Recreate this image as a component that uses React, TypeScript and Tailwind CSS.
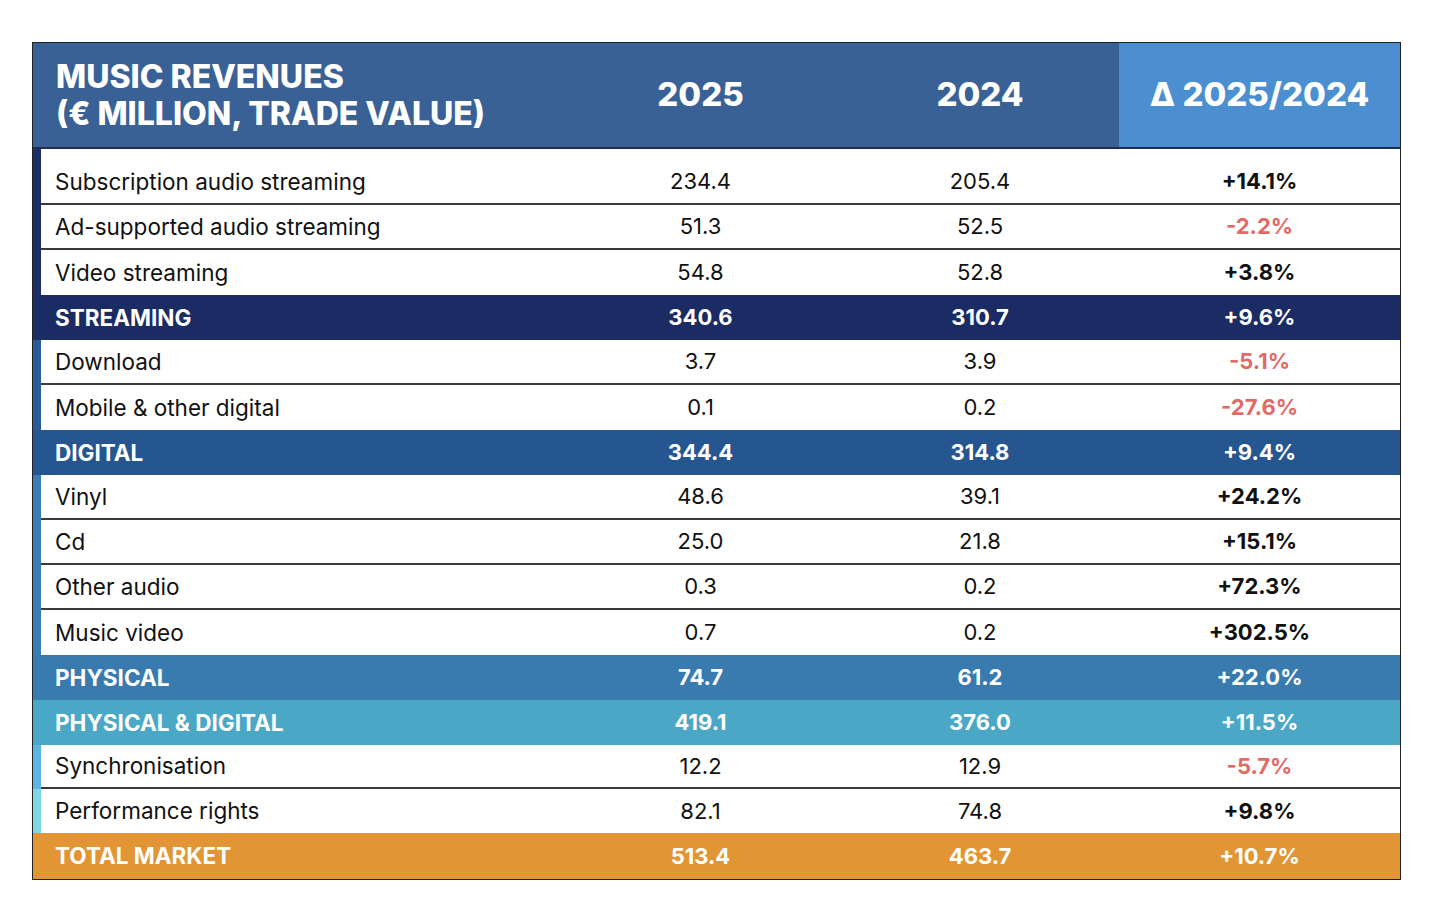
import React from "react";

type Row = {
  label: string;
  y25: string;
  y24: string;
  delta: string;
  kind: "item" | "total";
  bg?: string;
  strip: string;
  neg?: boolean;
  first?: boolean;
  line?: boolean;
  h: string;
};

const rows: Row[] = [
  { label: "Subscription audio streaming", y25: "234.4", y24: "205.4", delta: "+14.1%", kind: "item", strip: "bg-[#1c2d66]", first: true, line: true, h: "h-[56px] pt-[11px]" },
  { label: "Ad-supported audio streaming", y25: "51.3", y24: "52.5", delta: "-2.2%", kind: "item", strip: "bg-[#1c2d66]", neg: true, line: true, h: "h-[45px]" },
  { label: "Video streaming", y25: "54.8", y24: "52.8", delta: "+3.8%", kind: "item", strip: "bg-[#1c2d66]", h: "h-[45px]" },
  { label: "STREAMING", y25: "340.6", y24: "310.7", delta: "+9.6%", kind: "total", bg: "bg-[#1b2b63]", strip: "bg-[#1b2b63]", h: "h-[45px]" },
  { label: "Download", y25: "3.7", y24: "3.9", delta: "-5.1%", kind: "item", strip: "bg-[#2a5c98]", neg: true, line: true, h: "h-[45px]" },
  { label: "Mobile & other digital", y25: "0.1", y24: "0.2", delta: "-27.6%", kind: "item", strip: "bg-[#2a5c98]", neg: true, h: "h-[45px]" },
  { label: "DIGITAL", y25: "344.4", y24: "314.8", delta: "+9.4%", kind: "total", bg: "bg-[#26568f]", strip: "bg-[#26568f]", h: "h-[45px]" },
  { label: "Vinyl", y25: "48.6", y24: "39.1", delta: "+24.2%", kind: "item", strip: "bg-[#3b7cb2]", line: true, h: "h-[45px]" },
  { label: "Cd", y25: "25.0", y24: "21.8", delta: "+15.1%", kind: "item", strip: "bg-[#3b7cb2]", line: true, h: "h-[45px]" },
  { label: "Other audio", y25: "0.3", y24: "0.2", delta: "+72.3%", kind: "item", strip: "bg-[#3b7cb2]", line: true, h: "h-[45px]" },
  { label: "Music video", y25: "0.7", y24: "0.2", delta: "+302.5%", kind: "item", strip: "bg-[#3b7cb2]", h: "h-[45px]" },
  { label: "PHYSICAL", y25: "74.7", y24: "61.2", delta: "+22.0%", kind: "total", bg: "bg-[#397bae]", strip: "bg-[#397bae]", h: "h-[45px]" },
  { label: "PHYSICAL & DIGITAL", y25: "419.1", y24: "376.0", delta: "+11.5%", kind: "total", bg: "bg-[#4aa8c6]", strip: "bg-[#4aa8c6]", h: "h-[45px]" },
  { label: "Synchronisation", y25: "12.2", y24: "12.9", delta: "-5.7%", kind: "item", strip: "bg-[#5cb6e2]", neg: true, line: true, h: "h-[44px]" },
  { label: "Performance rights", y25: "82.1", y24: "74.8", delta: "+9.8%", kind: "item", strip: "bg-[#7fd5e0]", h: "h-[44px]" },
  { label: "TOTAL MARKET", y25: "513.4", y24: "463.7", delta: "+10.7%", kind: "total", bg: "bg-[#e19534]", strip: "bg-[#e19534]", h: "h-[46px]" },
];

const TableRow = ({ row }: { row: Row }) => {
  const isTotal = row.kind === "total";
  return (
    <div className="flex">
      <div className={`w-[8px] shrink-0 ${row.strip}`} />
      <div
        className={`grid flex-1 grid-cols-[519px_281px_278px_1fr] items-center ${
          isTotal ? `${row.bg} text-white font-bold` : "bg-white text-[#111]"
        } ${row.h} ${row.line ? "border-b-2 border-[#3a3a3a]" : ""}`}
      >
        <div className="pl-[14px] text-[22.5px]">{row.label}</div>
        <div className="text-center text-[22px]">{row.y25}</div>
        <div className="text-center text-[22px]">{row.y24}</div>
        <div
          className={`text-center text-[22px] font-bold ${
            isTotal ? "text-white" : row.neg ? "text-[#e26a66]" : "text-[#111]"
          }`}
        >
          {row.delta}
        </div>
      </div>
    </div>
  );
};

const App = () => {
  return (
    <div
      className="min-h-[908px] w-[1456px] bg-white pt-[42px] pl-[32px]"
      style={{ fontFamily: "Inter, 'Noto Sans', sans-serif" }}
    >
      <div className="w-[1369px] border border-[#222]">
        <div className="grid h-[106px] grid-cols-[527px_281px_278px_1fr] border-b-2 border-[#1d2e55] text-white">
          <div className="flex flex-col justify-center bg-[#3a6195] pl-[23px] text-[32px] font-extrabold leading-[37px]">
            <div>MUSIC REVENUES</div>
            <div>(€ MILLION, TRADE VALUE)</div>
          </div>
          <div className="flex items-center justify-center bg-[#3a6195] text-[33px] font-extrabold">2025</div>
          <div className="flex items-center justify-center bg-[#3a6195] text-[33px] font-extrabold">2024</div>
          <div className="flex items-center justify-center bg-[#4b8fd0] text-[33px] font-extrabold">Δ 2025/2024</div>
        </div>
        {rows.map((row, i) => (
          <TableRow row={row} key={i} />
        ))}
      </div>
    </div>
  );
};

export default App;
